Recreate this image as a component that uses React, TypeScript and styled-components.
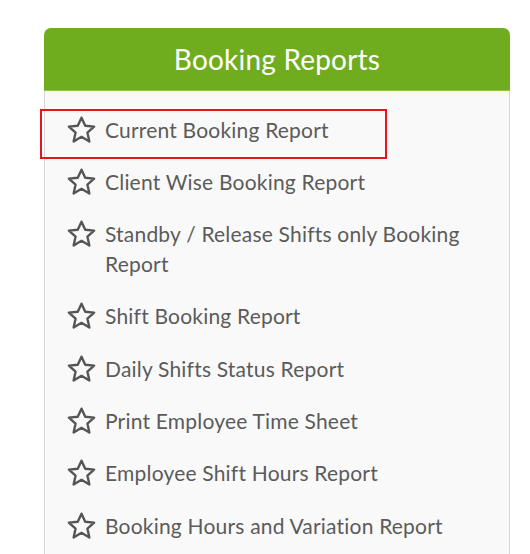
import React from "react";
import styled, { createGlobalStyle } from "styled-components";

const GlobalStyle = createGlobalStyle`
  html, body { margin: 0; padding: 0; background: #ffffff; }
  body { font-family: Lato, "Open Sans", sans-serif; }
`;

const Page = styled.div`
  padding: 28px 20px 0 44px;
`;

const Card = styled.div`
  position: relative;
  width: 466px;
  box-sizing: border-box;
  border: 1px solid #d6d6d6;
  border-top: none;
  border-radius: 7px 7px 0 0;
  background: #f9f9f9;
`;

const Header = styled.div`
  height: 63px;
  margin: 0 -1px;
  background: #6fad1e;
  border-radius: 7px 7px 0 0;
  border-bottom: 1px solid #8cc54a;
  box-sizing: border-box;
  display: flex;
  align-items: center;
  justify-content: center;
`;

const Title = styled.h2`
  margin: 0;
  color: #ffffff;
  font-family: Lato, sans-serif;
  font-weight: 400;
  font-size: 28px;
  letter-spacing: 0.2px;
`;

const List = styled.ul`
  list-style: none;
  margin: 0;
  padding: 12px 20px 10px 22px;
`;

const Item = styled.li`
  display: flex;
  align-items: flex-start;
  gap: 9px;
  padding: 11.5px 0;
`;

const StarIcon = styled.svg`
  flex: none;
  width: 29px;
  height: 28px;
  margin-top: 1px;
`;

const Label = styled.span`
  font-family: Lato, sans-serif;
  font-size: 21px;
  letter-spacing: 0.2px;
  line-height: 29.4px;
  color: #5b5b5b;
`;

const Highlight = styled.div`
  position: absolute;
  left: -5px;
  top: 81px;
  width: 347px;
  height: 50px;
  box-sizing: border-box;
  border: 2px solid #e8141c;
  pointer-events: none;
`;

const Star = () => (
  <StarIcon viewBox="0 0 28 27">
    <polygon
      points="14,1.6 17.6,9.4 26.2,10.2 19.7,16 21.6,24.6 14,20.1 6.4,24.6 8.3,16 1.8,10.2 10.4,9.4"
      fill="none"
      stroke="#555555"
      strokeWidth="2.3"
      strokeLinejoin="round"
    />
  </StarIcon>
);

const reports = [
  "Current Booking Report",
  "Client Wise Booking Report",
  "Standby / Release Shifts only Booking Report",
  "Shift Booking Report",
  "Daily Shifts Status Report",
  "Print Employee Time Sheet",
  "Employee Shift Hours Report",
  "Booking Hours and Variation Report",
];

export default function App() {
  return (
    <>
      <GlobalStyle />
      <Page>
        <Card>
          <Header>
            <Title>Booking Reports</Title>
          </Header>
          <List>
            {reports.map((r) => (
              <Item key={r}>
                <Star />
                <Label>{r}</Label>
              </Item>
            ))}
          </List>
          <Highlight />
        </Card>
      </Page>
    </>
  );
}
